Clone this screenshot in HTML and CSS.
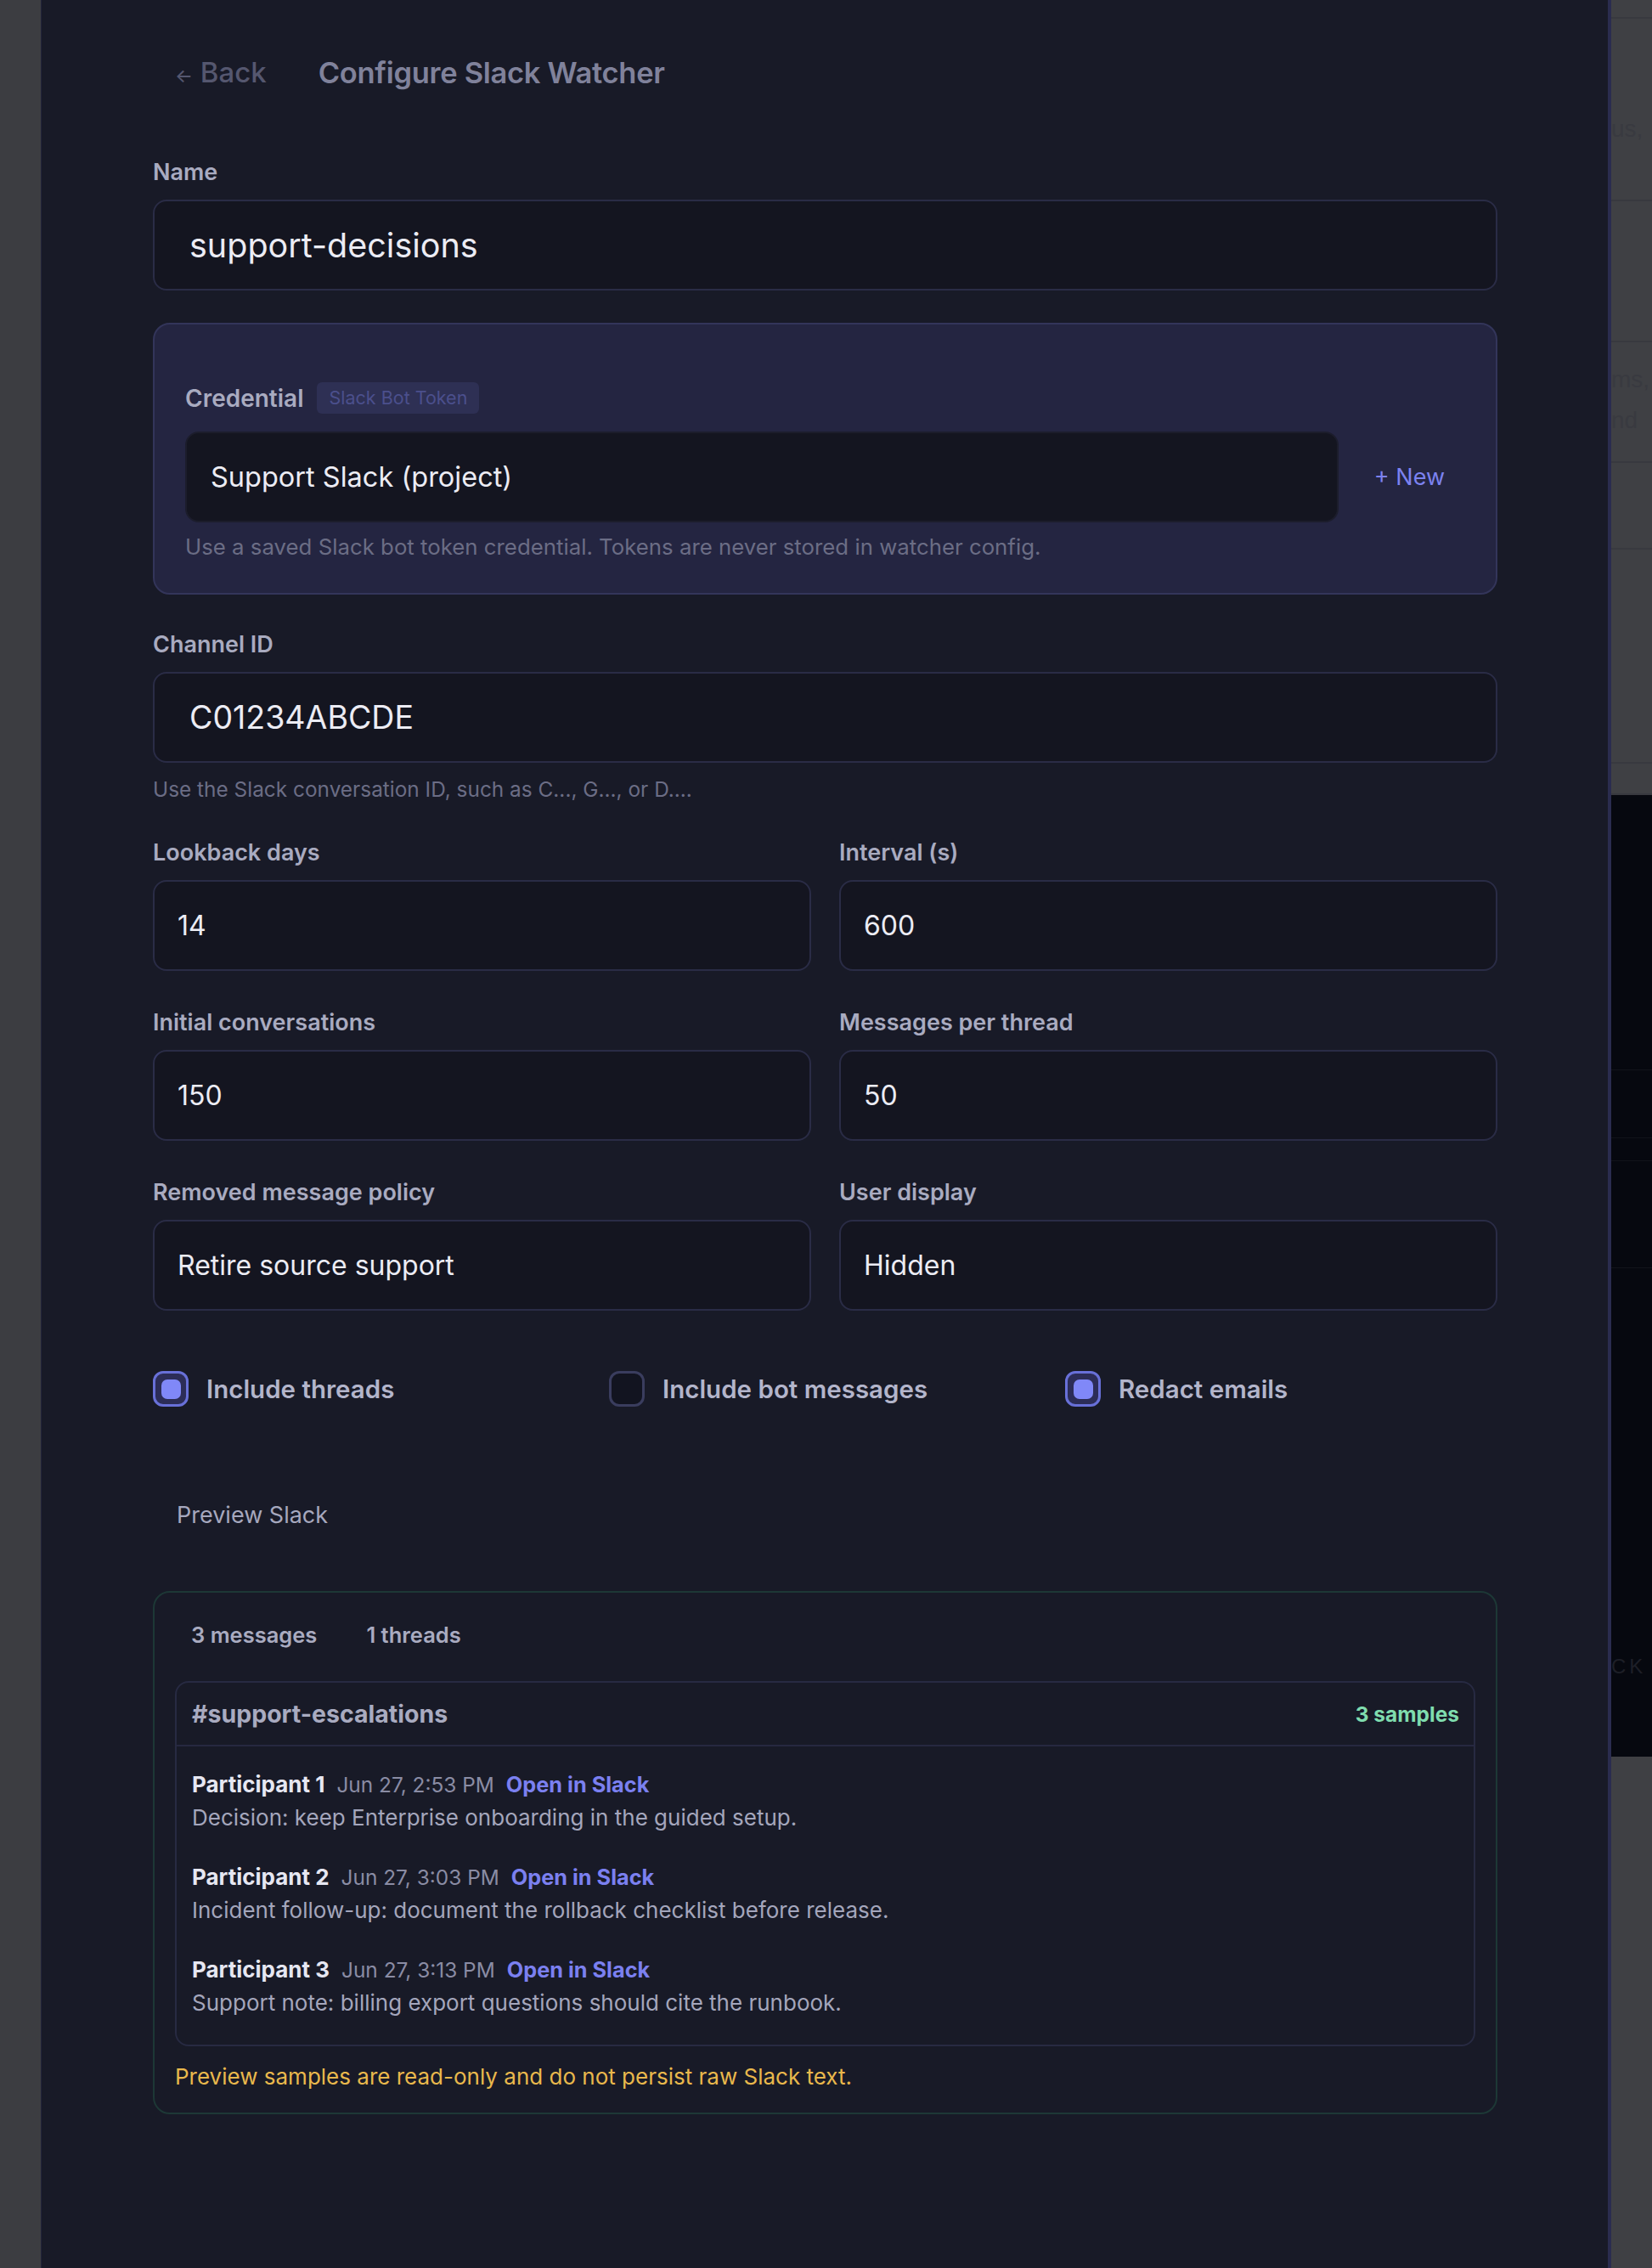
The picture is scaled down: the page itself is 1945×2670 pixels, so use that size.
FILE: index.html
```html
<!DOCTYPE html>
<html lang="en">
<head>
    <meta charset="UTF-8">
    <meta name="viewport" content="width=device-width, initial-scale=1.0">
    <title>Configure Slack Watcher</title>
    <link rel="stylesheet" href="styles.css">
</head>
<body>
    <div class="screen">
        <div class="backdrop-left"></div>

        <main class="modal">
            <div class="modal-header">
                <button type="button" class="back-btn"><span class="arrow">&larr;</span> Back</button>
                <h1>Configure Slack Watcher</h1>
            </div>

            <div class="field">
                <label for="name">Name</label>
                <input type="text" id="name" class="input input-lg input-name" value="support-decisions">
            </div>

            <div class="credential-box">
                <div class="credential-head">
                    <span class="label">Credential</span>
                    <span class="badge">Slack Bot Token</span>
                </div>
                <div class="credential-row">
                    <select class="input select-cred" aria-label="Credential">
                        <option>Support Slack (project)</option>
                    </select>
                    <button type="button" class="new-btn">+ New</button>
                </div>
                <p class="hint">Use a saved Slack bot token credential. Tokens are never stored in watcher config.</p>
            </div>

            <div class="field">
                <label for="channel">Channel ID</label>
                <input type="text" id="channel" class="input input-lg" value="C01234ABCDE">
                <p class="hint">Use the Slack conversation ID, such as C..., G..., or D....</p>
            </div>

            <div class="grid-2">
                <div class="field">
                    <label for="lookback">Lookback days</label>
                    <input type="text" id="lookback" class="input" value="14">
                </div>
                <div class="field">
                    <label for="interval">Interval (s)</label>
                    <input type="text" id="interval" class="input" value="600">
                </div>
                <div class="field">
                    <label for="initial">Initial conversations</label>
                    <input type="text" id="initial" class="input" value="150">
                </div>
                <div class="field">
                    <label for="perthread">Messages per thread</label>
                    <input type="text" id="perthread" class="input" value="50">
                </div>
                <div class="field">
                    <label for="policy">Removed message policy</label>
                    <select id="policy" class="input">
                        <option>Retire source support</option>
                    </select>
                </div>
                <div class="field">
                    <label for="display">User display</label>
                    <select id="display" class="input">
                        <option>Hidden</option>
                    </select>
                </div>
            </div>

            <div class="checks">
                <label class="check-item"><span class="check checked"></span>Include threads</label>
                <label class="check-item"><span class="check"></span>Include bot messages</label>
                <label class="check-item"><span class="check checked"></span>Redact emails</label>
            </div>

            <button type="button" class="preview-btn">Preview Slack</button>

            <section class="preview">
                <div class="stats">
                    <span>3 messages</span>
                    <span>1 threads</span>
                </div>
                <div class="channel-card">
                    <div class="channel-head">
                        <span class="channel-name">#support-escalations</span>
                        <span class="samples">3 samples</span>
                    </div>
                    <div class="messages">
                        <div class="message">
                            <div class="msg-meta">
                                <span class="author">Participant 1</span>
                                <span class="time">Jun 27, 2:53 PM</span>
                                <a class="open-link">Open in Slack</a>
                            </div>
                            <p class="msg-text">Decision: keep Enterprise onboarding in the guided setup.</p>
                        </div>
                        <div class="message">
                            <div class="msg-meta">
                                <span class="author">Participant 2</span>
                                <span class="time">Jun 27, 3:03 PM</span>
                                <a class="open-link">Open in Slack</a>
                            </div>
                            <p class="msg-text">Incident follow-up: document the rollback checklist before release.</p>
                        </div>
                        <div class="message">
                            <div class="msg-meta">
                                <span class="author">Participant 3</span>
                                <span class="time">Jun 27, 3:13 PM</span>
                                <a class="open-link">Open in Slack</a>
                            </div>
                            <p class="msg-text">Support note: billing export questions should cite the runbook.</p>
                        </div>
                    </div>
                </div>
                <p class="preview-note">Preview samples are read-only and do not persist raw Slack text.</p>
            </section>
        </main>

        <div class="backdrop-right">
            <div class="bg-row" style="height: 22px"></div>
            <div class="bg-row" style="height: 215px"><span class="bg-text">us,</span></div>
            <div class="bg-row" style="height: 166px"></div>
            <div class="bg-row" style="height: 142px"><span class="bg-text">ms,<br>nd</span></div>
            <div class="bg-row" style="height: 102px"></div>
            <div class="bg-row" style="height: 252px"></div>
            <div class="bg-row" style="height: 37px"></div>
            <div class="bg-dark">
                <div class="dark-row" style="height: 324px"></div>
                <div class="dark-row" style="height: 80px"></div>
                <div class="dark-row" style="height: 27px"></div>
                <div class="dark-row" style="height: 126px"></div>
                <div class="dark-row dark-tail"><span class="dark-text">CK</span></div>
            </div>
        </div>
    </div>
</body>
</html>
```

FILE: styles.css
```css
* {
    box-sizing: border-box;
}
body {
    margin: 0;
    background-color: #3d3e42;
    font-family: Inter, 'Noto Sans', sans-serif;
    color: #ececf4;
}
.screen {
    display: flex;
    width: 1945px;
    min-height: 2670px;
}
.backdrop-left {
    width: 48px;
    flex-shrink: 0;
    background-color: #3c3d41;
}
.backdrop-right {
    width: 48px;
    flex-shrink: 0;
    background-color: #3f4044;
    display: flex;
    flex-direction: column;
    overflow: hidden;
}
.bg-row {
    border-bottom: 2px solid #38393f;
}
.bg-text {
    display: block;
    margin-top: 106px;
    font-family: 'Liberation Sans', sans-serif;
    font-size: 28px;
    line-height: 48px;
    color: #393a40;
}
.bg-row:nth-child(4) .bg-text {
    margin-top: 20px;
}
.bg-dark {
    height: 1132px;
    background-color: #06080f;
    display: flex;
    flex-direction: column;
}
.dark-row {
    border-bottom: 1px solid #11131a;
}
.dark-tail {
    flex: 1;
    border-bottom: none;
    padding-top: 455px;
}
.dark-text {
    font-family: 'Liberation Sans', sans-serif;
    font-size: 24px;
    letter-spacing: 4px;
    color: #1d1f27;
}

/* modal */
.modal {
    flex: 1;
    background-color: #181a27;
    border-left: 1px solid #22243a;
    border-right: 4px solid #2a2c4f;
    padding: 60px 130px 120px 131px;
}
.modal-header {
    display: flex;
    align-items: center;
    height: 50px;
    gap: 35px;
    margin-bottom: 77px;
}
.back-btn {
    background: none;
    border: none;
    padding: 0 26px;
    font-family: inherit;
    font-size: 33px;
    font-weight: 500;
    color: #55576f;
    cursor: pointer;
}
.back-btn .arrow {
    font-size: 22px;
}
.modal-header h1 {
    margin: 0;
    font-size: 34.5px;
    font-weight: 600;
    color: #80829b;
    letter-spacing: -0.3px;
}

.field {
    display: flex;
    flex-direction: column;
}
.field label,
.label {
    font-size: 27px;
    font-weight: 600;
    line-height: 32px;
    color: #a9abc0;
    margin-bottom: 16px;
}
.input {
    height: 107px;
    width: 100%;
    background-color: #141520;
    border: 2px solid #2a2c46;
    border-radius: 16px;
    padding: 0 27px;
    font-family: inherit;
    font-size: 32px;
    color: #ececf4;
    outline: none;
    appearance: none;
    -webkit-appearance: none;
}
.input-lg {
    padding: 0 41px;
    font-size: 37.5px;
}
.input-name {
    font-size: 39.5px;
}
.hint {
    margin: 16px 0 0;
    font-size: 24.4px;
    line-height: 30px;
    color: #6b6d85;
}

/* credential */
.credential-box {
    margin: 38px 0 43px;
    background-color: #242541;
    border: 2px solid #33355a;
    border-radius: 20px;
    padding: 68px 36px 39px;
}
.credential-head {
    display: flex;
    align-items: center;
    gap: 16px;
    margin-bottom: 21px;
}
.credential-head .label {
    margin-bottom: 0;
    font-size: 28px;
}
.badge {
    background-color: #2e3054;
    color: #4b4f8c;
    font-size: 21.5px;
    line-height: 37px;
    padding: 0 14px;
    border-radius: 6px;
}
.credential-row {
    display: flex;
    align-items: center;
    gap: 18px;
}
.select-cred {
    flex: 1;
    border-color: #1c1d2c;
    padding: 0 28px;
    font-size: 32.5px;
}
.new-btn {
    background: none;
    border: none;
    padding: 0 24px;
    font-family: inherit;
    font-size: 27px;
    color: #7c82f0;
    cursor: pointer;
}
.credential-box .hint {
    margin-top: 14px;
    font-size: 25.8px;
}

.grid-2 {
    display: grid;
    grid-template-columns: 1fr 1fr;
    column-gap: 33px;
    row-gap: 45px;
    margin-top: 44px;
}

/* checkboxes */
.checks {
    display: grid;
    grid-template-columns: repeat(3, 1fr);
    gap: 28px;
    margin-top: 70px;
}
.check-item {
    display: flex;
    align-items: center;
    gap: 21px;
    font-size: 29.5px;
    font-weight: 600;
    color: #b3b5cb;
    height: 44px;
}
.check {
    width: 42px;
    height: 42px;
    border: 3px solid #3a3d5e;
    border-radius: 12px;
    background-color: #121420;
    display: flex;
    align-items: center;
    justify-content: center;
}
.check.checked {
    border-color: #6870d8;
    background-color: #2c2d58;
}
.check.checked::after {
    content: "";
    width: 23px;
    height: 23px;
    border-radius: 7px;
    background-color: #8088f8;
}

.preview-btn {
    display: block;
    margin-top: 96px;
    height: 60px;
    padding: 0 28px;
    background: none;
    border: none;
    font-family: inherit;
    font-size: 27px;
    color: #a6a8be;
    cursor: pointer;
}

/* preview */
.preview {
    margin-top: 60px;
    border: 2px solid #1d3836;
    border-radius: 20px;
    padding: 35px 24px 27px;
}
.stats {
    display: flex;
    gap: 20px;
    margin-bottom: 39px;
}
.stats span {
    padding: 0 19px;
    font-size: 25.5px;
    font-weight: 600;
    line-height: 30px;
    color: #a9abc0;
}
.channel-card {
    border: 2px solid #272a42;
    border-radius: 16px;
}
.channel-head {
    display: flex;
    justify-content: space-between;
    align-items: center;
    height: 75px;
    padding: 0 17px 0 18px;
    border-bottom: 2px solid #262840;
}
.channel-name {
    font-size: 28.5px;
    font-weight: 700;
    color: #a9abc0;
}
.samples {
    font-size: 24.5px;
    font-weight: 700;
    color: #7fdcae;
}
.messages {
    padding: 28px 18px 32px;
    display: flex;
    flex-direction: column;
    gap: 36px;
}
.msg-meta {
    display: flex;
    align-items: baseline;
    gap: 14px;
    line-height: 34px;
}
.author {
    font-size: 26px;
    font-weight: 700;
    color: #e6e7f2;
}
.time {
    font-size: 24.4px;
    color: #8a8ca4;
}
.open-link {
    font-size: 25.3px;
    font-weight: 700;
    color: #7b80f0;
    cursor: pointer;
}
.msg-text {
    margin: 5px 0 0;
    font-size: 26px;
    line-height: 34px;
    color: #a4a6bc;
}
.preview-note {
    margin: 21px 0 0;
    font-size: 26px;
    line-height: 30px;
    color: #e9b84c;
}
```
